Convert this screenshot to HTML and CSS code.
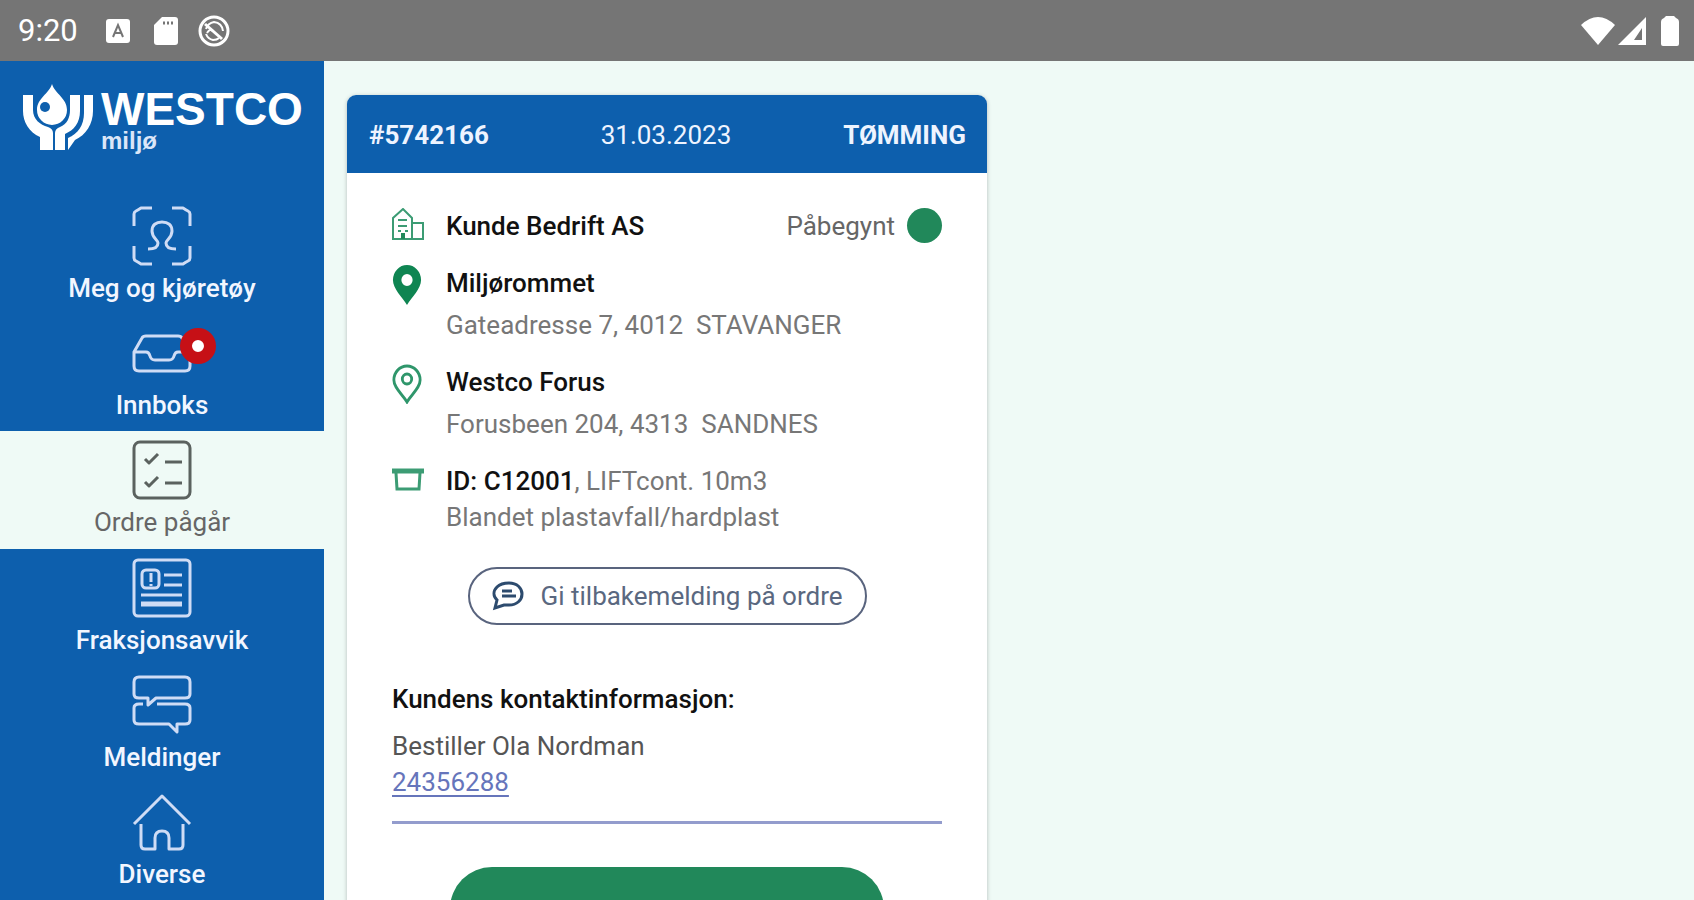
FILE: index.html
```html
<!DOCTYPE html>
<html lang="no">
<head>
<meta charset="utf-8">
<meta name="viewport" content="width=device-width, initial-scale=1">
<title>Westco miljø – Ordre pågår</title>
<link rel="stylesheet" href="styles.css">
</head>
<body>
<header class="status">
  <div class="status-left">
    <time class="clock">9:20</time>
    <svg width="24" height="26" viewBox="0 0 24 26"><rect y="1" width="24" height="24" rx="3" fill="#fff"/><path d="M7 19l5-12 5 12M9 15h6" fill="none" stroke="#757575" stroke-width="2"/></svg>
    <svg width="24" height="28" viewBox="0 0 24 28"><path d="M8 0h13a3 3 0 0 1 3 3v22a3 3 0 0 1-3 3H3a3 3 0 0 1-3-3V8z" fill="#fff"/><path d="M9 6h2M13 6h2M17 6h2" stroke="#757575" stroke-width="3"/></svg>
    <svg class="dnd" width="32" height="32" viewBox="0 0 32 32" fill="none" stroke="#fff"><circle cx="16" cy="16" r="14" stroke-width="3"/><path d="M8 14q2-6 8-7 8 1 9 9M8 19q2 5 7 6 4 0 6-2" stroke-width="2"/><path d="M7 9l17 15" stroke-width="3"/><path d="M9 18q3-5 6-2" stroke-width="2"/></svg>
  </div>
  <div class="status-right">
    <svg width="34" height="28" viewBox="0 0 34 28"><path d="M0 8Q17-8 34 8L17 28z" fill="#fff"/></svg>
    <svg class="signal" width="28" height="28" viewBox="0 0 28 28"><path fill-rule="evenodd" d="M28 0v28H0zM24 11l-8 12h8z" fill="#fff"/></svg>
    <svg width="18" height="30" viewBox="0 0 18 30"><path d="M5 0h8l2 2q3 1 3 4v22a2 2 0 0 1-2 2H2a2 2 0 0 1-2-2V6q0-3 3-4z" fill="#fff"/></svg>
  </div>
</header>
<div class="app">
  <aside class="sidebar">
    <div class="logo">
      <svg width="70" height="66" viewBox="0 0 70 66">
        <g fill="#fff">
          <path d="M0 11h10v15c0 9 7 15 15 17 3 1 5 3 5 6v17H17V53C6 48 0 38 0 27z"/>
          <path d="M61 11h9v16c0 13-7 24-18 29l-7 10V54c10-4 16-13 16-25z"/>
          <path d="M47 11h10v16c0 12-6 19-15 23v16H32V49c0-3 2-5 5-6 7-3 10-9 10-17z"/>
        </g>
        <path d="M29 0c3 10 15 14 15 26a15 15 0 0 1-30 0C14 14 26 10 29 0z" fill="#fff" stroke="#0d5fad" stroke-width="3" paint-order="stroke"/>
        <circle cx="22" cy="23" r="5" fill="#0d5fad"/>
      </svg>
      <div class="brand"><span class="brand-name">WESTCO</span><span class="brand-sub">miljø</span></div>
    </div>
    <nav class="nav">
      <a class="nav-item" href="#meg">
        <svg class="nav-icon" viewBox="0 0 60 60"><path d="M2 20V8q0-2 2-3t5-3h11M40 2h11q3 2 5 3t2 3v12M58 40v12q0 2-2 3t-5 3H40M20 58H9q-3-2-5-3t-2-3V40"/><path d="M16 43c6 0 10-2 10-6 0-3-6-5-6-12 0-6 4-9 10-9s10 3 10 9c0 7-6 9-6 12 0 4 4 6 10 6"/></svg>
        <span>Meg og kjøretøy</span>
      </a>
      <a class="nav-item" href="#innboks">
        <span class="icon-wrap">
          <svg class="nav-icon" viewBox="0 0 60 60"><path d="M2 29L10 15q1-2 4-2h32q3 0 4 2l8 14v14q0 5-5 5H7q-5 0-5-5zM2 29h12q3 0 4 4t5 4h14q4 0 5-4t4-4h12"/></svg>
          <span class="badge"></span>
        </span>
        <span>Innboks</span>
      </a>
      <a class="nav-item active" href="#ordre" aria-current="page">
        <svg class="nav-icon" viewBox="0 0 60 60"><rect x="2" y="2" width="56" height="56" rx="6"/><path d="M13 19l4 4 9-9M13 42l4 4 9-9M33 22h17M33 43h17"/></svg>
        <span>Ordre pågår</span>
      </a>
      <a class="nav-item" href="#fraksjon">
        <svg class="nav-icon" viewBox="0 0 60 60"><rect x="2" y="2" width="56" height="56" rx="4"/><rect x="10" y="12" width="17" height="18" rx="4"/><path d="M19 15v9M19 26v2M32 17h18M32 27h18M9 37h41"/><path d="M9 46h41" stroke-width="5"/></svg>
        <span>Fraksjonsavvik</span>
      </a>
      <a class="nav-item" href="#meldinger">
        <svg class="nav-icon" viewBox="0 0 60 60"><path d="M7 2h46q5 0 5 5v12q0 4-5 4H24l-8 7v-7H7q-5 0-5-4V7q0-5 5-5z"/><path d="M11 29H7q-5 0-5 4v12q0 4 5 4h30l8 8v-8h8q5 0 5-4V33q0-4-5-4H25"/></svg>
        <span>Meldinger</span>
      </a>
      <a class="nav-item" href="#diverse">
        <svg class="nav-icon" viewBox="0 0 60 60"><path d="M2 32L30 4l28 28M9 32v21q0 4 4 4h10V46q0-7 7-7t7 7v11h10q4 0 4-4V32"/></svg>
        <span>Diverse</span>
      </a>
    </nav>
  </aside>
  <main class="main">
    <article class="card">
      <header class="card-head">
        <strong>#5742166</strong><time>31.03.2023</time><strong>TØMMING</strong>
      </header>
      <div class="card-body">
        <section class="row">
          <svg class="row-icon" width="32" height="32" viewBox="0 0 32 32" fill="none" stroke="#3c9c74" stroke-width="2"><path d="M1 31V10L11 1l9 9v21zM20 15h11v16H20M6 12h9M6 18h9M6 23h3M13 23h3"/><path d="M11 25v6" stroke="#21885a" stroke-width="4"/></svg>
          <div class="row-text"><h2>Kunde Bedrift AS</h2></div>
          <div class="state">Påbegynt<span class="dot"></span></div>
        </section>
        <section class="row">
          <svg class="row-icon" width="30" height="40" viewBox="0 0 32 40" preserveAspectRatio="none"><path fill-rule="evenodd" d="M16 0a15 15 0 0 1 15 15c0 9-10 17-15 25C11 32 1 24 1 15A15 15 0 0 1 16 0zm0 9a6 6 0 1 0 0 12 6 6 0 0 0 0-12z" fill="#0f8552"/></svg>
          <div class="row-text"><h2>Miljørommet</h2><p class="address">Gateadresse 7, 4012&nbsp; STAVANGER</p></div>
        </section>
        <section class="row">
          <svg class="row-icon" width="30" height="40" viewBox="0 0 32 40" preserveAspectRatio="none" fill="none" stroke="#2f966b" stroke-width="3"><path d="M16 2a14 14 0 0 1 14 14c0 8-9 14-14 22C11 30 2 24 2 16A14 14 0 0 1 16 2z"/><circle cx="16" cy="15" r="5"/></svg>
          <div class="row-text"><h2>Westco Forus</h2><p class="address">Forusbeen 204, 4313&nbsp; SANDNES</p></div>
        </section>
        <section class="row">
          <svg class="row-icon" width="32" height="30" viewBox="0 0 32 30" fill="none" stroke="#3c9c74"><path d="M0 8h32" stroke-width="5"/><path d="M4 10l1 16h22l1-16" stroke-width="3"/></svg>
          <div class="row-text"><h2>ID: C12001<span>, LIFTcont. 10m3</span></h2><p>Blandet plastavfall/hardplast</p></div>
        </section>
        <button class="feedback" type="button">
          <svg width="32" height="30" viewBox="0 0 32 30" fill="none" stroke="#2d4b6e" stroke-width="3"><path d="M5 19C1 15 1 10 5 6 9 2 13 2 17 2c8 0 13 5 13 11s-5 11-13 11h-5l-9 3zM10 10h10M10 15h14"/></svg>
          Gi tilbakemelding på ordre
        </button>
        <section class="contact">
          <h2>Kundens kontaktinformasjon:</h2>
          <p>Bestiller Ola Nordman</p>
          <a href="tel:24356288">24356288</a>
        </section>
        <button class="primary" type="button" aria-label="Fullfør"></button>
      </div>
    </article>
  </main>
</div>
</body>
</html>
```
FILE: styles.css
```css
* { box-sizing: border-box; }
body {
  margin: 0;
  height: 100vh;
  display: flex;
  flex-direction: column;
  overflow: hidden;
  font: 400 26px/32px Roboto, "Liberation Sans", sans-serif;
  color: #555;
  background: #effaf6;
}
h2, p { margin: 0; font: inherit; }
svg { display: block; flex: none; }

.status {
  flex: none;
  height: 61px;
  padding: 0 15px 0 18px;
  display: flex;
  align-items: center;
  justify-content: space-between;
  color: #fff;
  background: #757575;
}
.status-left { display: flex; align-items: center; gap: 24px; }
.clock { font-size: 31px; margin-right: 4px; }
.dnd { margin-left: -4px; }
.status-right { display: flex; align-items: center; gap: 3px; }
.signal { margin-right: 12px; }

.app { flex: 1; min-height: 0; display: flex; }
.sidebar { flex: none; width: 324px; overflow: hidden; background: #0d5fad; color: #f2f6ff; }
.logo { height: 136px; padding: 23px 20px 0 23px; display: flex; gap: 8px; }
.brand { display: flex; flex-direction: column; margin-top: 3px; font-family: "Liberation Sans", sans-serif; font-weight: 700; color: #fff; }
.brand-name { font-size: 46px; line-height: 44px; }
.brand-sub { font-size: 24px; line-height: 20px; color: #dbe6f8; }

.nav-item {
  height: 117px;
  padding-top: 9px;
  display: flex;
  flex-direction: column;
  align-items: center;
  gap: 6px;
  color: inherit;
  font-weight: 500;
  text-decoration: none;
}
.nav-item.active { height: 118px; background: #effaf6; color: #666; font-weight: 400; }
.nav-icon { width: 60px; height: 60px; fill: none; stroke: #cfdcf5; stroke-width: 3; stroke-linejoin: round; }
.active .nav-icon { stroke: #5b625f; }
.icon-wrap { position: relative; }
.badge {
  position: absolute;
  top: 5px;
  right: -24px;
  width: 36px;
  height: 36px;
  border: 12px solid #c61016;
  border-radius: 50%;
  background: #fff;
}

.main { flex: 1; min-width: 0; padding: 34px 23px 0; }
.card { max-width: 640px; border-radius: 9px; background: #fff; box-shadow: 0 1px 4px rgba(0, 0, 0, .25); }
.card-head {
  height: 78px;
  padding: 2px 21px 0 22px;
  display: flex;
  align-items: center;
  justify-content: space-between;
  border-radius: 9px 9px 0 0;
  color: #eef4ff;
  background: #0d5fad;
}
.card-head strong { font-weight: 700; }
.card-body { padding: 37px 45px 40px; display: flex; flex-direction: column; }
.row { display: grid; grid-template-columns: 32px 1fr auto; column-gap: 22px; margin-bottom: 25px; color: #777; }
.row-text { display: flex; flex-direction: column; gap: 4px; }
.row-icon { margin-top: -2px; }
.row-text h2, .contact h2 { font-weight: 500; color: #111; }
.row-text h2 span { font-weight: 400; color: #777; }
.address { margin-top: 6px; }
.state { display: flex; align-items: center; gap: 12px; color: #666; }
.dot { width: 35px; height: 35px; margin: -3px 0 -1px; border-radius: 50%; background: #21885a; }
.feedback {
  align-self: center;
  height: 58px;
  margin-top: 9px;
  padding: 0 22px;
  display: flex;
  align-items: center;
  gap: 17px;
  border: 2px solid #59647e;
  border-radius: 29px;
  background: #fff;
  color: #5a6880;
  font: inherit;
}
.contact { margin-top: 58px; padding-bottom: 23px; border-bottom: 3px solid #939ccd; }
.contact p { margin-top: 15px; }
.contact a { display: inline-block; margin-top: 4px; color: #6675bb; text-underline-offset: 4px; }
.primary { align-self: center; width: 434px; height: 84px; margin-top: 43px; border: 0; border-radius: 42px; background: #21885a; }
```
